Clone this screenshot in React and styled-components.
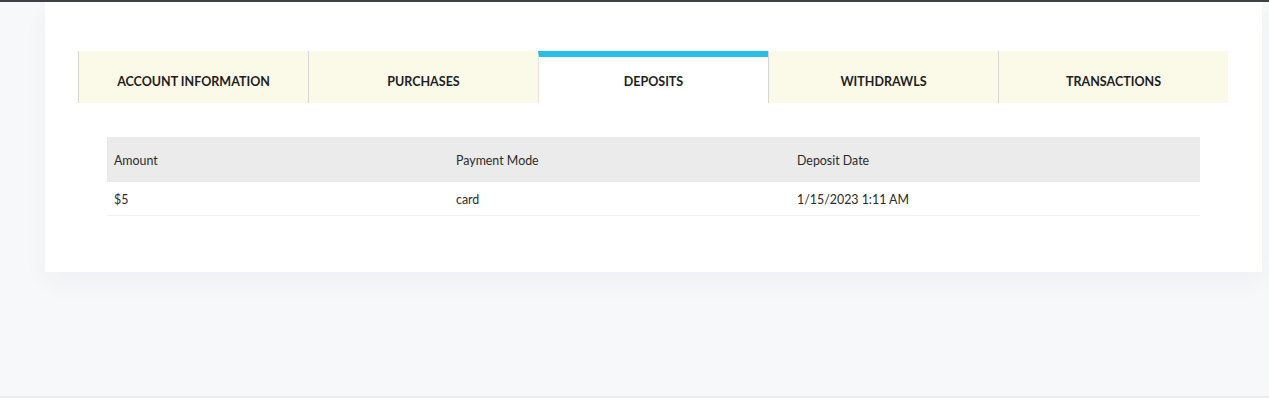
import React, { useState } from "react";
import styled, { createGlobalStyle, css } from "styled-components";

const Global = createGlobalStyle`
  html, body { margin: 0; padding: 0; }
  body {
    background: #f7f8fa;
    font-family: Lato, "Open Sans", sans-serif;
    color: #222;
  }
  * { box-sizing: border-box; }
`;

const Page = styled.div`
  height: 398px;
  border-top: 2px solid #3d4047;
  border-bottom: 2px solid #ececee;
  padding: 0 7px 0 45px;
  overflow: hidden;
`;

const Card = styled.div`
  background: #fff;
  height: 270px;
  padding: 49px 34px 0 33px;
  box-shadow: 0 10px 24px rgba(30, 40, 70, 0.04);
`;

const Tabs = styled.div`
  display: grid;
  grid-template-columns: repeat(5, 1fr);
  height: 52px;
`;

const Tab = styled.button`
  border: 0;
  border-left: 1px solid ${(p) => p.$edge};
  background: #fbf9e8;
  font-family: Lato, sans-serif;
  font-weight: 700;
  font-size: 12.5px;
  color: #1e1e1e;
  text-transform: uppercase;
  padding: 9px 0 0;
  cursor: pointer;
  display: flex;
  align-items: center;
  justify-content: center;
  ${(p) =>
    p.$active &&
    css`
      background: #fff;
      border-top: 6px solid #27bfe8;
      padding-top: 3px;
    `}
`;

const Table = styled.div`
  margin: 34px 28px 0 29px;
  font-size: 12.4px;
  color: #2a2a2a;
`;

const HeadRow = styled.div`
  display: grid;
  grid-template-columns: 342px 341px 1fr;
  height: 45px;
  align-items: center;
  background: #ebebeb;
  padding-left: 7px;
`;

const BodyRow = styled.div`
  display: grid;
  grid-template-columns: 342px 341px 1fr;
  height: 34px;
  align-items: center;
  padding-left: 7px;
  border-bottom: 1px solid #f1f1f1;
`;

const Cell = styled.div`
  padding-top: ${(p) => (p.$head ? "1px" : "2px")};
`;

const tabs = [
  "Account Information",
  "Purchases",
  "Deposits",
  "Withdrawls",
  "Transactions",
];

export default function App() {
  const [active, setActive] = useState(2);
  const edge = (i) => {
    if (i === 0) return "#d6d6d0";
    if (i === active) return "#e4e2da";
    return "#d6d6d6";
  };
  return (
    <>
      <Global />
      <Page>
        <Card>
          <Tabs>
            {tabs.map((t, i) => (
              <Tab
                key={t}
                $active={i === active}
                $edge={edge(i)}
                onClick={() => setActive(i)}
              >
                {t}
              </Tab>
            ))}
          </Tabs>
          <Table>
            <HeadRow>
              <Cell $head>Amount</Cell>
              <Cell $head>Payment Mode</Cell>
              <Cell $head>Deposit Date</Cell>
            </HeadRow>
            <BodyRow>
              <Cell>$5</Cell>
              <Cell>card</Cell>
              <Cell>1/15/2023 1:11 AM</Cell>
            </BodyRow>
          </Table>
        </Card>
      </Page>
    </>
  );
}
